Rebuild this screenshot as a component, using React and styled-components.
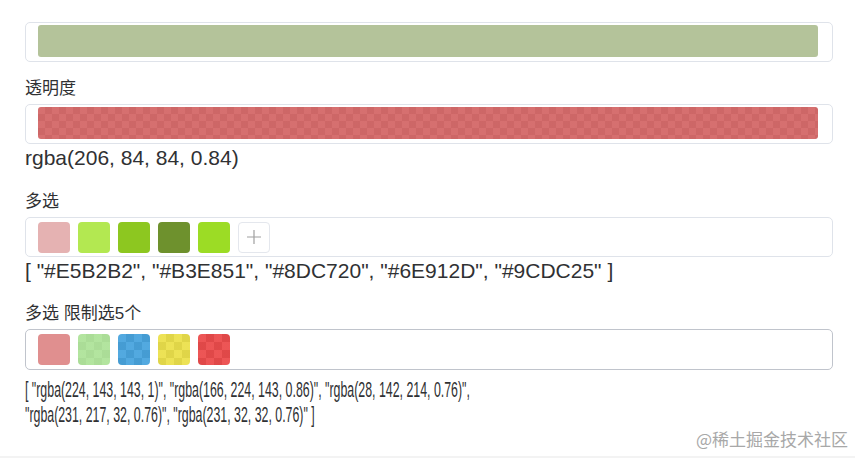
import React from "react";
import styled, { createGlobalStyle } from "styled-components";

const Global = createGlobalStyle`
  html, body { margin: 0; padding: 0; background: #fff; }
  body {
    font-family: "Liberation Sans", "Noto Sans CJK SC", sans-serif;
    color: #303133;
  }
`;

const Page = styled.div`
  position: relative;
  width: 855px;
  height: 458px;
  box-sizing: border-box;
  padding: 22px 22px 0 25px;
  border-bottom: 2px solid #f3f3f3;
  display: flex;
  flex-direction: column;
  overflow: hidden;
`;

const Field = styled.div`
  display: flex;
  flex-direction: column;
  width: 808px;
  margin-bottom: ${(p) => p.$after}px;
`;

const Label = styled.div`
  font-size: 17px;
  line-height: 24px;
  height: 24px;
  margin-bottom: 3px;
`;

const Box = styled.div`
  box-sizing: border-box;
  width: 808px;
  height: ${(p) => p.$h || 40}px;
  border: 1px solid ${(p) => (p.$active ? "#c0c4cc" : "#dfe3ea")};
  border-radius: 5px;
  background: #fff;
  display: flex;
  align-items: ${(p) => (p.$bar ? "flex-start" : "center")};
  padding: ${(p) => (p.$bar ? "2px 14px 0 12px" : "0 12px")};
  gap: 8px;
`;

const checker = (c, t) =>
  `linear-gradient(${c}, ${c}), repeating-conic-gradient(#c9c9c9 0 25%, #ffffff 0 50%) 0 0 / ${t}px ${t}px`;

const Bar = styled.div`
  flex: 1;
  height: 32px;
  border-radius: 3px;
  background: ${(p) => checker(p.$color, 14)};
`;

const Swatch = styled.div`
  width: 32px;
  height: 31px;
  border-radius: 4px;
  background: ${(p) => checker(p.$color, 16)};
`;

const AddButton = styled.div`
  box-sizing: border-box;
  width: 32px;
  height: 31px;
  border: 1px solid #e4e7ed;
  border-radius: 4px;
  background: #fff;
  display: flex;
  align-items: center;
  justify-content: center;
`;

const Value = styled.div`
  font-size: ${(p) => (p.$condensed ? 21.5 : 21)}px;
  line-height: 25px;
  margin-top: ${(p) => (p.$condensed ? 8 : 1)}px;
  color: #303133;
  transform: ${(p) => (p.$condensed ? "scaleX(0.575)" : "none")};
  transform-origin: left top;
`;

const Watermark = styled.div`
  position: absolute;
  right: 7px;
  bottom: 5px;
  font-size: 17px;
  line-height: 24px;
  color: #a8a8a8;
  font-family: "Noto Sans CJK SC", "Liberation Sans", sans-serif;
`;

const Plus = () => (
  <svg width="14" height="14" viewBox="0 0 14 14">
    <path d="M7 0V14M0 7H14" stroke="#a0a0a0" strokeWidth="1.2" fill="none" />
  </svg>
);

const hexes = ["#E5B2B2", "#B3E851", "#8DC720", "#6E912D", "#9CDC25"];
const rgbas = [
  "rgba(224, 143, 143, 1)",
  "rgba(166, 224, 143, 0.86)",
  "rgba(28, 142, 214, 0.76)",
  "rgba(231, 217, 32, 0.76)",
  "rgba(231, 32, 32, 0.76)",
];

export default function App() {
  return (
    <Page>
      <Global />
      <Field $after={15}>
        <Box $bar>
          <Bar $color="#b4c39a" />
        </Box>
      </Field>
      <Field $after={20}>
        <Label>透明度</Label>
        <Box $bar>
          <Bar $color="rgba(206, 84, 84, 0.84)" />
        </Box>
        <Value>rgba(206, 84, 84, 0.84)</Value>
      </Field>
      <Field $after={19}>
        <Label>多选</Label>
        <Box>
          {hexes.map((c) => (
            <Swatch key={c} $color={c} />
          ))}
          <AddButton>
            <Plus />
          </AddButton>
        </Box>
        <Value>{"[ " + hexes.map((h) => `"${h}"`).join(", ") + " ]"}</Value>
      </Field>
      <Field $after={0}>
        <Label>多选 限制选5个</Label>
        <Box $active $h={41}>
          {rgbas.map((c) => (
            <Swatch key={c} $color={c} />
          ))}
        </Box>
        <Value $condensed>{"[ " + rgbas.map((h) => `"${h}"`).join(", ") + " ]"}</Value>
      </Field>
      <Watermark>@稀土掘金技术社区</Watermark>
    </Page>
  );
}
